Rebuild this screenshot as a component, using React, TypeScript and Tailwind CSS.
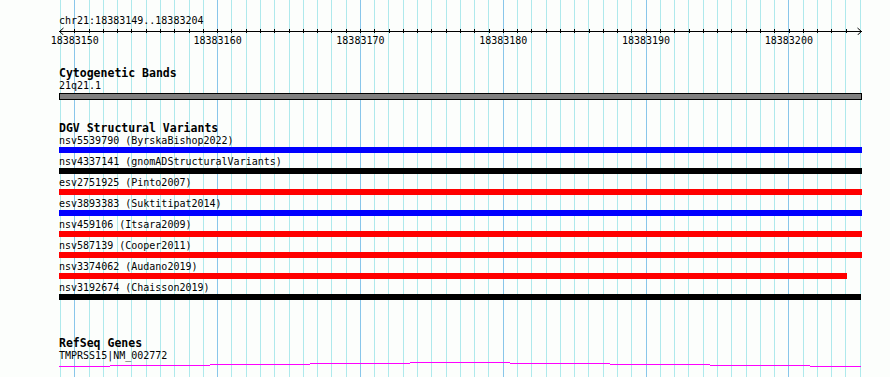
import React from "react";

type Variant = {
  id: string;
  study: string;
  color: string;
  width: string;
};

const START = 18383149;
const COLS = 57; // one line per base, 18383149..18383205

const variants: Variant[] = [
  { id: "nsv5539790", study: "ByrskaBishop2022", color: "bg-[#0000ff]", width: "w-[803px]" },
  { id: "nsv4337141", study: "gnomADStructuralVariants", color: "bg-black", width: "w-[803px]" },
  { id: "esv2751925", study: "Pinto2007", color: "bg-[#ff0000]", width: "w-[803px]" },
  { id: "esv3893383", study: "Suktitipat2014", color: "bg-[#0000ff]", width: "w-[803px]" },
  { id: "nsv459106", study: "Itsara2009", color: "bg-[#ff0000]", width: "w-[803px]" },
  { id: "nsv587139", study: "Cooper2011", color: "bg-[#ff0000]", width: "w-[803px]" },
  { id: "nsv3374062", study: "Audano2019", color: "bg-[#ff0000]", width: "w-[788px]" },
  { id: "nsv3192674", study: "Chaisson2019", color: "bg-black", width: "w-[802px]" },
];

const cols = Array.from({ length: COLS }, (_, k) => k);
const isMajor = (k: number) => (START + k) % 10 === 0;

// gene line: shallow hat shape, one pixel row per 100px
const geneSteps = [
  { x: 59, w: 51, y: 366 },
  { x: 110, w: 100, y: 365 },
  { x: 210, w: 100, y: 364 },
  { x: 310, w: 100, y: 363 },
  { x: 410, w: 100, y: 362 },
  { x: 510, w: 100, y: 363 },
  { x: 610, w: 100, y: 364 },
  { x: 710, w: 100, y: 365 },
  { x: 810, w: 51, y: 366 },
];

function TrackTitle({ children }: { children: React.ReactNode }) {
  return <div className="h-[13px] text-[11.5px] font-bold leading-[13px] text-black">{children}</div>;
}

function FeatureLabel({ children }: { children: React.ReactNode }) {
  return <div className="h-[12px] whitespace-nowrap text-[10px] leading-[12px] text-black">{children}</div>;
}

function Ruler() {
  return (
    <svg width={804} height={8} className="block" shapeRendering="crispEdges">
      <rect x={0} y={4} width={803} height={1} fill="#000" />
      {cols.slice(1, COLS - 1).map((k) => (
        <rect key={k} x={Math.round(60 + (k * 800) / 56) - 59} y={2} width={1} height={4} fill="#000" />
      ))}
      <polyline points="4.5,1 0.5,4.5 4.5,8" fill="none" stroke="#000" strokeWidth={1} shapeRendering="auto" />
      <polyline points="798.5,1 802.5,4.5 798.5,8" fill="none" stroke="#000" strokeWidth={1} shapeRendering="auto" />
    </svg>
  );
}

export default function App() {
  return (
    <div
      className="relative h-[377px] w-[890px] overflow-hidden bg-[#fcfefc]"
      style={{ fontFamily: '"DejaVu Sans Mono", "Liberation Mono", monospace' }}
    >
      {/* base grid lines */}
      <div className="absolute inset-y-0 left-[60px] flex w-[801px] justify-between">
        {cols.map((k) => (
          <div key={k} className={isMajor(k) ? "h-full w-px bg-[#88c6ea]" : "h-full w-px bg-[#aee9ec]"} />
        ))}
      </div>

      <div className="relative flex flex-col pl-[59px] pt-[15px]">
        <div className="h-[12px] text-[10px] leading-[12px] text-black">chr21:18383149..18383204</div>
        <Ruler />
        <div className="ml-px flex h-[12px] w-[801px] justify-between">
          {cols.map((k) => (
            <div key={k} className="flex w-px justify-center">
              {isMajor(k) && (
                <span className="whitespace-nowrap text-[10px] leading-[12px] text-black">{START + k}</span>
              )}
            </div>
          ))}
        </div>

        <div className="mt-[20px]">
          <TrackTitle>Cytogenetic Bands</TrackTitle>
          <FeatureLabel>21q21.1</FeatureLabel>
          <div className="mt-px h-[7px] w-[803px] border border-black bg-[#808080]" />
        </div>

        <div className="mt-[22px]">
          <TrackTitle>DGV Structural Variants</TrackTitle>
          <div className="flex flex-col gap-[3px]">
            {variants.map((v) => (
              <div key={v.id}>
                <FeatureLabel>
                  {v.id} ({v.study})
                </FeatureLabel>
                <div className={`h-[6px] ${v.width} ${v.color}`} />
              </div>
            ))}
          </div>
        </div>

        <div className="mt-[37px]">
          <TrackTitle>RefSeq Genes</TrackTitle>
          <FeatureLabel>TMPRSS15|NM_002772</FeatureLabel>
          <svg width={804} height={6} className="-ml-[59px] block w-[890px]" viewBox="0 0 890 6" shapeRendering="crispEdges">
            {geneSteps.map((s) => (
              <rect key={s.x} x={s.x} y={s.y - 362} width={s.w} height={1} fill="#ff00ff" />
            ))}
          </svg>
        </div>
      </div>
    </div>
  );
}
